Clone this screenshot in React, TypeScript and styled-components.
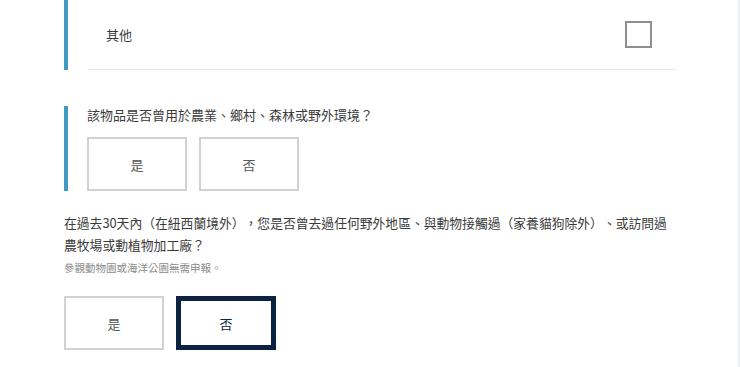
import React from "react";
import styled, { createGlobalStyle } from "styled-components";

const Global = createGlobalStyle`
  html, body { margin: 0; padding: 0; background: #ffffff; }
  body {
    font-family: "Noto Sans CJK TC", "Noto Sans", "Liberation Sans", sans-serif;
    color: #3a3a3a;
    text-spacing-trim: space-all;
  }
`;

const Page = styled.div`
  box-sizing: border-box;
  width: 740px;
  min-height: 100vh;
  padding-left: 64px;
  border-right: 2px solid #eef1f2;
`;

const Content = styled.div`
  width: 612px;
`;

const BarSection = styled.section<{ $pad?: number }>`
  border-left: 4px solid #4499c2;
  padding-left: ${(p) => p.$pad ?? 19}px;
`;

const OptionRow = styled.div`
  display: flex;
  align-items: center;
  justify-content: space-between;
  height: 70px;
  padding: 0 24px 0 18px;
  border-bottom: 1px solid #ebebeb;
  box-sizing: border-box;
  margin-bottom: 13px;
`;

const OptionLabel = styled.span`
  font-size: 13px;
  color: #3a3a3a;
`;

const Checkbox = styled.span`
  display: block;
  box-sizing: border-box;
  width: 27px;
  height: 27px;
  border: 2px solid #8f8f8f;
  background: #fff;
`;

const Question = styled.p`
  margin: 0;
  font-size: 13px;
  line-height: 18px;
  color: #3a3a3a;
  margin-bottom: 13px;
`;

const Question3 = styled.p`
  margin: 21px 0 0;
  font-size: 12.8px;
  line-height: 22px;
  color: #3a3a3a;
`;

const Hint = styled.p`
  margin: 4px 0 0;
  font-size: 10.5px;
  line-height: 16px;
  color: #8a8a8a;
`;

const Choices = styled.div<{ $top?: number }>`
  display: flex;
  gap: 12px;
  margin-top: ${(p) => p.$top ?? 0}px;
`;

const Spacer = styled.div`
  height: 23px;
`;

const Choice = styled.button<{ $selected?: boolean }>`
  box-sizing: border-box;
  width: 100px;
  height: 54px;
  background: #fff;
  font-family: inherit;
  font-size: 13px;
  cursor: pointer;
  padding: 0;
  border: ${(p) => (p.$selected ? "5px solid #0b2341" : "2px solid #d2d2d2")};
  color: ${(p) => (p.$selected ? "#0b2341" : "#555")};
`;

export default function App() {
  return (
    <>
      <Global />
      <Page>
        <Content>
          <BarSection $pad={20}>
            <OptionRow>
              <OptionLabel>其他</OptionLabel>
              <Checkbox />
            </OptionRow>
          </BarSection>
          <Spacer />
          <BarSection>
            <Question>該物品是否曾用於農業、鄉村、森林或野外環境？</Question>
            <Choices>
              <Choice>是</Choice>
              <Choice>否</Choice>
            </Choices>
          </BarSection>
          <Question3>
            在過去30天內（在紐西蘭境外），您是否曾去過任何野外地區、與動物接觸過（家養貓狗除外）、或訪問過農牧場或動植物加工廠？
          </Question3>
          <Hint>參觀動物園或海洋公園無需申報。</Hint>
          <Choices $top={20}>
            <Choice>是</Choice>
            <Choice $selected>否</Choice>
          </Choices>
        </Content>
      </Page>
    </>
  );
}
